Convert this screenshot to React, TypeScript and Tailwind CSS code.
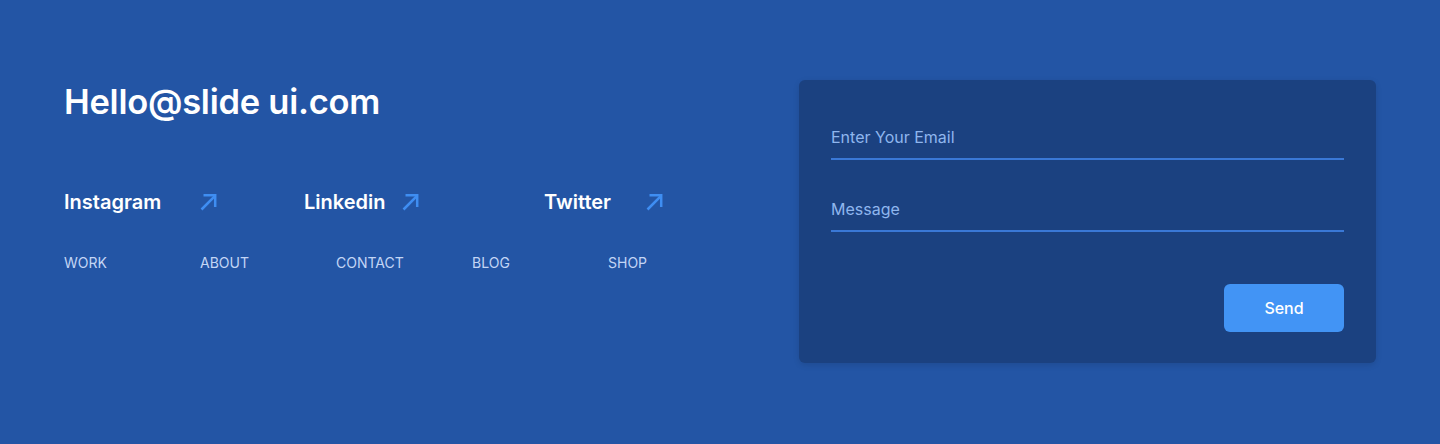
import React from "react";

function Arrow() {
  return (
    <svg width="17" height="18" viewBox="0 0 17 18" fill="none" stroke="#3f8ef2" strokeWidth="2.5" strokeLinecap="butt" strokeLinejoin="miter">
      <path d="M1.5 16.5L14.8 3.2" />
      <path d="M3.5 2.3H15.2V14" />
    </svg>
  );
}

export default function App() {
  const socials = [
    { name: "Instagram", w: "w-[136px]" },
    { name: "Linkedin", w: "w-[98px]" },
    { name: "Twitter", w: "w-[102px]" },
  ];
  const nav = ["WORK", "ABOUT", "CONTACT", "BLOG", "SHOP"];
  return (
    <div className="w-[1440px] h-[444px] bg-[#2355a5] font-['Inter',sans-serif] flex justify-between pl-16 pr-16 pt-20">
      <div className="flex flex-col">
        <h1 className="mt-[2px] text-[34.5px] leading-[40px] font-semibold text-white tracking-[-0.25px]">Hello@slide ui.com</h1>
        <div className="flex mt-[66px]">
          {socials.map((s) => (
            <div key={s.name} className="w-[240px] flex items-center">
              <span className={`${s.w} text-[20px] leading-[28px] font-semibold text-white`}>{s.name}</span>
              <Arrow />
            </div>
          ))}
        </div>
        <div className="flex mt-[37px]">
          {nav.map((n) => (
            <span key={n} className="w-[136px] text-[14px] leading-[20px] text-[#c3d6f5]">{n}</span>
          ))}
        </div>
      </div>
      <div className="w-[577px] h-[283px] rounded-md bg-[#1b4180] shadow-[0_2px_6px_rgba(0,0,0,0.12)] px-8 pt-8 flex flex-col">
        <input
          placeholder="Enter Your Email"
          className="h-[48px] pt-1 bg-transparent border-b-2 border-[#3a78d6] text-[16px] text-white placeholder:text-[#8fb6ee] outline-none"
        />
        <input
          placeholder="Message"
          className="mt-6 h-[48px] pt-1 bg-transparent border-b-2 border-[#3a78d6] text-[16px] text-white placeholder:text-[#8fb6ee] outline-none"
        />
        <div className="flex justify-end mt-[52px]">
          <button className="w-[120px] h-[48px] rounded-md bg-[#4294f5] text-white text-[16px] font-medium">Send</button>
        </div>
      </div>
    </div>
  );
}
